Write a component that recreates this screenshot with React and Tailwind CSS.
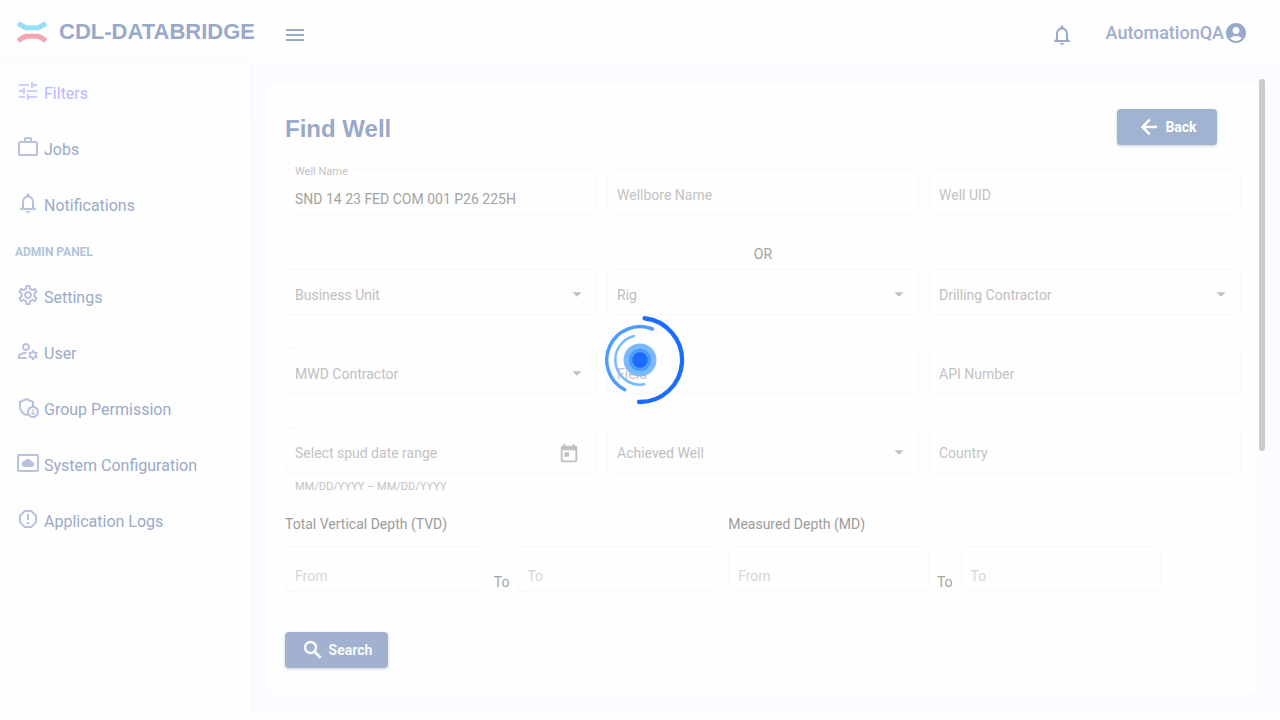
import React from "react";
import {
  MdTune,
  MdWorkOutline,
  MdNotificationsNone,
  MdOutlineSettings,
  MdOutlineManageAccounts,
  MdOutlineAdminPanelSettings,
  MdReportGmailerrorred,
  MdAccountCircle,
  MdToday,
  MdMenu,
  MdArrowDropDown,
} from "react-icons/md";

const box =
  "h-[46px] w-full min-w-0 appearance-none rounded-[5px] border border-[#f8f8f8] bg-transparent px-[9px] text-sm outline-none placeholder:opacity-100";

function CloudBoxIcon({ className }) {
  return (
    <svg viewBox="0 0 24 24" className={className} fill="currentColor" aria-hidden="true">
      <rect x="2" y="4" width="20" height="16" rx="1" fill="none" stroke="currentColor" strokeWidth="2" />
      <path d="M9 16h6.200a2.700 2.700 0 0 0 .4-5.400A3.900 3.900 0 0 0 8.500 10 3 3 0 0 0 9 16z" />
    </svg>
  );
}

function ArrowBackIcon() {
  return (
    <svg viewBox="0 0 24 24" className="size-6" fill="none" stroke="currentColor" strokeWidth="2.500" aria-hidden="true">
      <path d="M20 12H6M12.700 4.700 5.400 12l7.300 7.300" />
    </svg>
  );
}

function SearchIcon() {
  return (
    <svg viewBox="0 0 24 24" className="size-6" fill="none" stroke="currentColor" strokeWidth="2.400" aria-hidden="true">
      <circle cx="9.500" cy="9.500" r="5.500" />
      <path d="m13.700 13.700 6 6" strokeWidth="2.800" />
    </svg>
  );
}

function Logo() {
  return (
    <svg viewBox="0 0 30 22" className="h-[22px] w-[30px]" aria-hidden="true">
      <path d="M1 2.500 8.500 6.700h13L29 2.500" fill="none" stroke="#98dff9" strokeWidth="5" />
      <path d="M1 19.500 8.500 15.300h13L29 19.500" fill="none" stroke="#f8a5b1" strokeWidth="5" />
    </svg>
  );
}

function NavItem({ icon: Icon, label, active }) {
  return (
    <a
      href="#"
      className={
        active
          ? "flex h-14 items-center gap-1 bg-[#fcfdff] pl-4 text-[#b7b9fb]"
          : "flex h-14 items-center gap-1 pl-4 text-[#9aaac9]"
      }
    >
      <Icon className={active ? "mb-0.5 size-6 text-[#c9cdfb]" : "mb-0.5 size-6 text-[#b8c2dc]"} />
      <span className="pt-1">{label}</span>
    </a>
  );
}

function TextField({ label }) {
  return (
    <input
      type="text"
      aria-label={label}
      placeholder={label}
      className={`${box} pt-1.5 text-[#a3a3a3] placeholder:text-[#c3c3c3]`}
    />
  );
}

function SelectField({ label }) {
  return (
    <div className="relative">
      <select aria-label={label} className={`${box} pt-[5px] text-[#c0c0c0]`}>
        <option>{label}</option>
      </select>
      <MdArrowDropDown className="pointer-events-none absolute top-3.5 right-[9px] size-[22px] text-[#c0c0c0]" />
    </div>
  );
}

function DepthRange({ title }) {
  return (
    <fieldset className="min-w-0">
      <legend className="text-sm leading-[22px] text-[#9c9c9c]">{title}</legend>
      <div className="mt-[11px] flex items-end gap-2">
        <input
          type="text"
          aria-label={`${title} from`}
          placeholder="From"
          className={`${box} flex-1 pt-3.5 placeholder:text-[#d6d6d6]`}
        />
        <span className="text-sm leading-5 text-[#a3a3a3]">To</span>
        <input
          type="text"
          aria-label={`${title} to`}
          placeholder="To"
          className={`${box} flex-1 pt-3.5 placeholder:text-[#d6d6d6]`}
        />
      </div>
    </fieldset>
  );
}

function Spinner() {
  return (
    <div role="status" aria-label="Loading" className="pointer-events-none fixed inset-0 flex items-center justify-center">
      <svg viewBox="-45 -45 90 90" className="size-[90px]" fill="none" strokeLinecap="round">
        <path d="M4.600-41.750A42 42 0 0 1-1 41.990" stroke="#1a6dff" strokeWidth="4.300" />
        <path d="M12.400-31A33.400 33.400 0 0 0-15.200 29.740" stroke="#4d9dff" strokeWidth="3.500" />
        <path d="M-6-24A24.700 24.700 0 0 0 4.200 24.300" stroke="#7ab8ff" strokeWidth="2.500" />
        <circle r="16.500" fill="#7ab8ff" />
        <circle r="11.200" fill="#4d9dff" />
        <circle r="7.700" fill="#1a6dff" />
      </svg>
    </div>
  );
}

export default function App() {
  return (
    <div className="flex h-screen flex-col bg-[#fefefe] font-['Roboto','Liberation_Sans',sans-serif] text-base">
      <header className="flex h-16 shrink-0 items-center pr-8 pl-[17px]">
        <Logo />
        <div className="ml-3 font-['Liberation_Sans',sans-serif] text-[22px] leading-7 font-bold text-[#98a9c9]">
          CDL-DATABRIDGE
        </div>
        <button type="button" aria-label="Toggle menu" className="mt-1.5 ml-7 text-[#98a9c9]">
          <MdMenu className="size-6" />
        </button>
        <button type="button" aria-label="Notifications" className="mt-1.5 ml-auto text-[#98a9c9]">
          <MdNotificationsNone className="size-6" />
        </button>
        <button type="button" className="mt-0.5 ml-8 flex items-center text-lg font-medium text-[#9fafcd]">
          AutomationQA
          <MdAccountCircle className="size-6 text-[#98a9c9]" />
        </button>
      </header>

      <div className="flex min-h-0 flex-1 pb-[7px]">
        <aside className="w-[250px] shrink-0 bg-[#fefefe]">
          <div className="shadow-[0_-4px_12px_#f9fafc]">
            <NavItem icon={MdTune} label="Filters" active />
          </div>
          <nav aria-label="Main">
            <NavItem icon={MdWorkOutline} label="Jobs" />
            <NavItem icon={MdNotificationsNone} label="Notifications" />
            <h2 className="flex h-9 items-center pt-1 pl-[15px] text-xs font-bold text-[#b0c4da]">ADMIN PANEL</h2>
            <NavItem icon={MdOutlineSettings} label="Settings" />
            <NavItem icon={MdOutlineManageAccounts} label="User" />
            <NavItem icon={MdOutlineAdminPanelSettings} label="Group Permission" />
            <NavItem icon={CloudBoxIcon} label="System Configuration" />
            <NavItem icon={MdReportGmailerrorred} label="Application Logs" />
          </nav>
        </aside>

        <main className="relative min-w-0 flex-1 bg-[#fbfcff] pt-[18px] pr-[23px] pb-[18px] pl-[18px] shadow-[inset_8px_0_10px_-4px_#f8f9fe]">
          <form
            onSubmit={(e) => e.preventDefault()}
            className="h-full overflow-hidden rounded-[5px] bg-[#fefefe] pt-[27px] pr-4 pl-[17px] shadow-[0_0_2px_#eef1f6]"
          >
            <div className="mb-6 flex items-center justify-between pr-6">
              <h1 className="mt-1 font-['Liberation_Sans',sans-serif] text-2xl font-bold text-[#98a9c9]">Find Well</h1>
              <button
                type="button"
                className="flex h-9 w-[100px] items-center justify-center gap-1 rounded bg-[#a2b2d1] pb-px text-sm font-bold text-white shadow-[0_1px_3px_#c9cdd6]"
              >
                <ArrowBackIcon />
                Back
              </button>
            </div>

            <div className="grid grid-cols-3 gap-2.5">
              <div className="relative">
                <label
                  htmlFor="well-name"
                  className="absolute -top-[5px] left-1.5 bg-[#fefefe] px-1 text-[11px] leading-4 text-[#c3c3c3]"
                >
                  Well Name
                </label>
                <input
                  id="well-name"
                  type="text"
                  defaultValue="SND 14 23 FED COM 001 P26 225H"
                  className={`${box} pt-3.5 text-[#a3a3a3]`}
                />
              </div>
              <TextField label="Wellbore Name" />
              <TextField label="Well UID" />
            </div>

            <p className="h-[54px] pt-[29px] text-center text-sm leading-5 text-[#a3a3a3]">OR</p>

            <div className="grid grid-cols-3 items-start gap-x-2.5 gap-y-[33px]">
              <SelectField label="Business Unit" />
              <SelectField label="Rig" />
              <SelectField label="Drilling Contractor" />
              <SelectField label="MWD Contractor" />
              <TextField label="Field" />
              <TextField label="API Number" />
              <div>
                <div className="relative">
                  <TextField label="Select spud date range" />
                  <button type="button" aria-label="Open calendar" className="absolute top-4 right-[17px] text-[#c0c0c0]">
                    <MdToday className="size-[22px]" />
                  </button>
                </div>
                <p className="pt-1 pl-2.5 text-[11px] leading-5 text-[#c3c3c3]">MM/DD/YYYY – MM/DD/YYYY</p>
              </div>
              <SelectField label="Achieved Well" />
              <TextField label="Country" />
            </div>

            <div className="mt-4 grid w-11/12 grid-cols-2 gap-2.5">
              <DepthRange title="Total Vertical Depth (TVD)" />
              <DepthRange title="Measured Depth (MD)" />
            </div>

            <button
              type="submit"
              className="mt-10 flex h-9 w-[103px] items-center justify-center gap-1 rounded bg-[#a1b1cf] text-sm font-bold text-[#f8f9fb] shadow-[0_1px_3px_#c9cdd6]"
            >
              <SearchIcon />
              Search
            </button>
          </form>
          <div className="absolute top-[15px] right-[15px] h-[372px] w-1.5 rounded-full bg-[#cbcbcd]" />
        </main>
      </div>
      <Spinner />
    </div>
  );
}
